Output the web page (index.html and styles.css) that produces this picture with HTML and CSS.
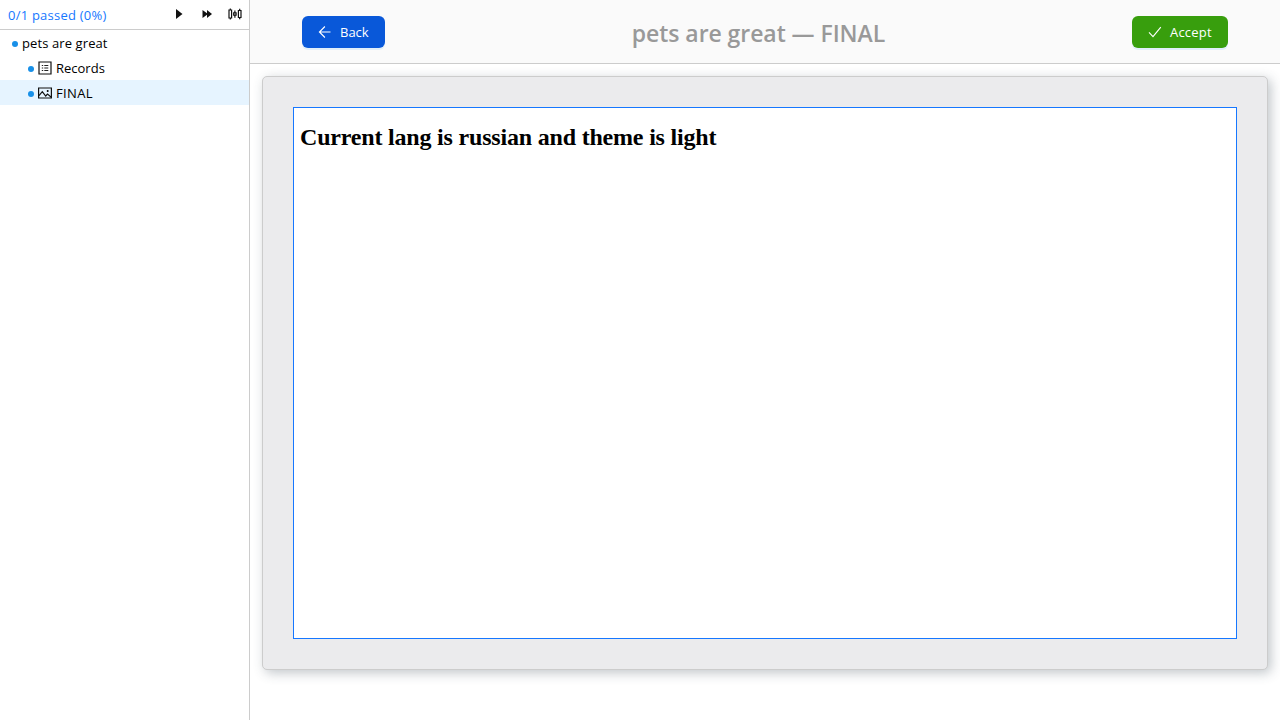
FILE: index.html
```html
<!DOCTYPE html>
<html lang="en">
<head>
<meta charset="utf-8">
<title>pets are great — FINAL</title>
<link rel="stylesheet" href="styles.css">
</head>
<body>
<div class="app">
  <aside class="sidebar">
    <div class="toolbar">
      <span class="status">0/1 passed (0%)</span>
      <div class="tools">
        <svg class="tool" viewBox="0 0 14 14"><path d="M4 2v10l6.5-5z"/></svg>
        <svg class="tool" viewBox="0 0 14 14"><path d="M2.5 3v8L7 7.7V11l5-4-5-4v3.3z"/></svg>
        <svg class="tool" viewBox="0 0 14 14"><path class="line bold" d="M1 3h2.6v8H1zM2.3 1.5V3M2.3 11v1.5M5.7 5.8h2.4v2.4H5.7zM6.9 3.5v2.3M6.9 8.2v2.5M10.4 3.5H13v7h-2.6zM11.7 1.8v1.7M11.7 10.5v1.7"/></svg>
      </div>
    </div>
    <ul class="tree">
      <li class="node root"><i class="dot"></i><span class="label l-root">pets are great</span></li>
      <li class="node child"><i class="dot"></i>
        <svg class="icon" viewBox="0 0 14 14"><path class="frame" d="M1 1h12v12H1z"/><path class="line" d="M3.8 4.5h1.4M6.3 4.5h4M3.8 7h1.4M6.3 7h4M3.8 9.5h1.4M6.3 9.5h4"/></svg>
        <span class="label l-rec">Records</span></li>
      <li class="node child selected"><i class="dot"></i>
        <svg class="icon" viewBox="0 0 14 14"><path class="frame" d="M.6 2h12.8v10H.6z"/><path class="frame" d="M1 9.7l3.3-4 3.4 4.3L9.5 8l3.8 3.2"/><circle cx="9.7" cy="5" r="1"/></svg>
        <span class="label l-fin">FINAL</span></li>
    </ul>
  </aside>
  <main class="main">
    <header class="header">
      <button class="btn back"><svg class="btn-icon" viewBox="0 0 14 14"><path d="M12.5 7H1.8M6.9 1.5L1.4 7l5.5 5.5"/></svg><span>Back</span></button>
      <h1 class="title">pets are great — FINAL</h1>
      <button class="btn accept"><svg class="btn-icon" viewBox="0 0 14 14"><path d="M1 7.4l4 4.2L12.8 2.2"/></svg><span>Accept</span></button>
    </header>
    <section class="panel">
      <div class="frame-box"><h2 class="message">Current lang is russian and theme is light</h2></div>
    </section>
  </main>
</div>
</body>
</html>
```
FILE: styles.css
```css
* { box-sizing: border-box; }
body { margin: 0; background: #fff; color: #000; font-family: "Open Sans", "Noto Sans", sans-serif; font-size: 13px; }
.app { display: flex; height: 720px; overflow: hidden; }
.sidebar { width: 250px; flex: none; border-right: 1px solid #ccc; }
.toolbar { display: flex; justify-content: space-between; height: 30px; padding: 0 7px 0 8px; border-bottom: 1px solid #ccc; }
.status { color: #1677ff; line-height: 30px; letter-spacing: .23px; white-space: nowrap; }
.tools { display: flex; gap: 14px; padding-top: 7px; }
.tool { width: 14px; height: 14px; fill: #111; }
.line { fill: none; stroke: #222; stroke-width: 1; }
.bold { stroke: #111; stroke-width: 1.2; }
.tree { list-style: none; margin: 0; padding: 0; }
.node { display: flex; align-items: center; height: 25px; }
.root { padding-left: 12px; }
.child { padding-left: 28px; }
.selected { background: #e6f4ff; }
.dot { width: 6px; height: 6px; margin: 3px 4px 0 0; border-radius: 50%; background: #1890e8; flex: none; }
.icon { width: 14px; height: 14px; margin: 1px 4px 0 0; flex: none; }
.frame { fill: none; stroke: #111; stroke-width: 1.2; }
.label { padding-top: 2px; white-space: nowrap; line-height: 23px; }
.l-root { letter-spacing: .1px; }
.l-fin { letter-spacing: .35px; }
.main { flex: 1; min-width: 0; }
.header { display: flex; justify-content: space-between; align-items: center; height: 64px; padding: 0 52px; background: #fafafa; border-bottom: 1px solid #ccc; }
.title { margin: 3px 0 0; color: #999; font-size: 23px; line-height: 32px; font-weight: 600; letter-spacing: -.06px; white-space: nowrap; }
.btn { display: flex; align-items: center; gap: 8px; height: 32px; padding: 0 16px; border: 0; border-radius: 6px; color: #fff; font: 13px/22px "Open Sans", "Noto Sans", sans-serif; white-space: nowrap; }
.back { width: 83px; background: #0958d9; box-shadow: 0 2px 0 rgba(5,145,255,.1); }
.accept { width: 96px; background: #389e0d; box-shadow: 0 2px 0 rgba(5,145,255,.1); letter-spacing: .2px; }
.btn-icon { width: 14px; height: 14px; fill: none; stroke: #fff; stroke-width: 1.1; flex: none; }
.panel { height: 594px; margin: 12px 12px 0; padding: 30px; background: #ebebed; border: 1px solid #ccc; border-radius: 5px; box-shadow: 3px 3px 12px rgba(50,65,80,.3); }
.frame-box { height: 532px; border: 1px solid #1677ff; background: #fff; padding: 16px 6px; }
.message { margin: 0; font: bold 24px/27px "Liberation Serif", serif; letter-spacing: -.19px; white-space: nowrap; }
```
